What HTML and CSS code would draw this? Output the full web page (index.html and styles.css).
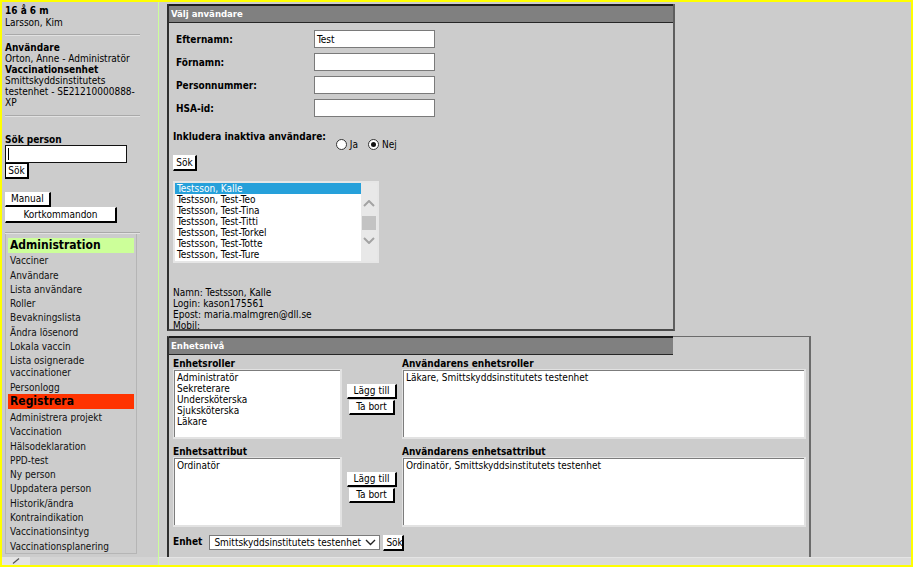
FILE: index.html
```html
<!DOCTYPE html>
<html lang="sv">
<head>
<meta charset="utf-8">
<title>Välj användare</title>
<link rel="stylesheet" href="styles.css">
</head>
<body>
<div class="frames">
  <aside class="side">
    <div class="side-view">
      <div class="patient"><b>16 å 6 m</b><br>Larsson, Kim</div>
      <hr class="sep sep-a">
      <div class="userinfo"><b>Användare</b><br>Orton, Anne - Administratör<br><b>Vaccinationsenhet</b><br>Smittskyddsinstitutets testenhet - SE21210000888-XP</div>
      <hr class="sep sep-b">
      <div class="quick">
        <div class="quick-label">Sök person</div>
        <div class="field quick-field"><span class="caret"></span></div>
        <button class="btn btn-quick">Sök</button>
      </div>
      <div class="help">
        <button class="btn btn-manual">Manual</button>
        <button class="btn btn-keys">Kortkommandon</button>
      </div>
      <hr class="sep sep-c">
      <nav class="menu">
        <div class="menu-head head-admin">Administration</div>
        <a class="menu-item">Vacciner</a>
        <a class="menu-item">Användare</a>
        <a class="menu-item">Lista användare</a>
        <a class="menu-item">Roller</a>
        <a class="menu-item">Bevakningslista</a>
        <a class="menu-item">Ändra lösenord</a>
        <a class="menu-item">Lokala vaccin</a>
        <a class="menu-item">Lista osignerade vaccinationer</a>
        <a class="menu-item">Personlogg</a>
        <div class="menu-head head-reg">Registrera</div>
        <a class="menu-item">Administrera projekt</a>
        <a class="menu-item">Vaccination</a>
        <a class="menu-item">Hälsodeklaration</a>
        <a class="menu-item">PPD-test</a>
        <a class="menu-item">Ny person</a>
        <a class="menu-item">Uppdatera person</a>
        <a class="menu-item">Historik/ändra</a>
        <a class="menu-item">Kontraindikation</a>
        <a class="menu-item">Vaccinationsintyg</a>
        <a class="menu-item">Vaccinationsplanering</a>
      </nav>
    </div>
    <div class="hbar side-hbar"><span class="grip"><svg width="8" height="6" viewBox="0 0 8 6"><path d="M1 5.5 L7 0.5" stroke="#555" stroke-width="1.2" fill="none"/></svg></span><span class="hbar-track"></span></div>
  </aside>

  <main class="main">
    <div class="main-view">
      <section class="panel panel-user">
        <h2 class="panel-head">Välj användare</h2>
        <div class="panel-body">
          <div class="form-grid">
            <label class="form-label">Efternamn:</label><div class="text-in">Test</div>
            <label class="form-label">Förnamn:</label><div class="text-in"></div>
            <label class="form-label">Personnummer:</label><div class="text-in"></div>
            <label class="form-label">HSA-id:</label><div class="text-in"></div>
          </div>
          <div class="inactive-row">
            <span class="inactive-label">Inkludera inaktiva användare:</span>
            <span class="radios">
              <span class="radio"></span><span class="radio-text">Ja</span>
              <span class="radio checked"></span><span class="radio-text">Nej</span>
            </span>
          </div>
          <button class="btn btn-search">Sök</button>
          <div class="userlist">
            <ul class="userlist-items">
              <li class="sel">Testsson, Kalle</li>
              <li>Testsson, Test-Teo</li>
              <li>Testsson, Test-Tina</li>
              <li>Testsson, Test-Titti</li>
              <li>Testsson, Test-Torkel</li>
              <li>Testsson, Test-Totte</li>
              <li>Testsson, Test-Ture</li>
            </ul>
            <div class="vscroll">
              <svg class="chev" width="12" height="7" viewBox="0 0 12 7"><polyline points="1,6 6,1 11,6" fill="none" stroke="#a3a3a3" stroke-width="2"/></svg>
              <span class="thumb"></span>
              <svg class="chev chev-down" width="12" height="7" viewBox="0 0 12 7"><polyline points="1,1 6,6 11,1" fill="none" stroke="#a3a3a3" stroke-width="2"/></svg>
            </div>
          </div>
          <div class="details">Namn: Testsson, Kalle<br>Login: kason175561<br>Epost: maria.malmgren@dll.se<br>Mobil:</div>
        </div>
      </section>

      <section class="panel panel-unit">
        <h2 class="panel-head">Enhetsnivå</h2>
        <div class="unit-grid">
          <div class="unit-cell">
            <div class="col-label">Enhetsroller</div>
            <ul class="box-list">
              <li>Administratör</li>
              <li>Sekreterare</li>
              <li>Undersköterska</li>
              <li>Sjuksköterska</li>
              <li>Läkare</li>
            </ul>
          </div>
          <div class="move-btns">
            <button class="btn btn-move">Lägg till</button>
            <button class="btn btn-move">Ta bort</button>
          </div>
          <div class="unit-cell">
            <div class="col-label">Användarens enhetsroller</div>
            <ul class="box-list">
              <li>Läkare, Smittskyddsinstitutets testenhet</li>
            </ul>
          </div>

          <div class="unit-cell">
            <div class="col-label">Enhetsattribut</div>
            <ul class="box-list">
              <li>Ordinatör</li>
            </ul>
          </div>
          <div class="move-btns">
            <button class="btn btn-move">Lägg till</button>
            <button class="btn btn-move">Ta bort</button>
          </div>
          <div class="unit-cell">
            <div class="col-label">Användarens enhetsattribut</div>
            <ul class="box-list">
              <li>Ordinatör, Smittskyddsinstitutets testenhet</li>
            </ul>
          </div>
        </div>
        <div class="unit-row">
          <span class="unit-label">Enhet</span>
          <div class="select"><span>Smittskyddsinstitutets testenhet</span><svg width="11" height="7" viewBox="0 0 11 7"><polyline points="1,1 5.5,5.5 10,1" fill="none" stroke="#222" stroke-width="1.4"/></svg></div>
          <button class="btn btn-unit">Sök</button>
        </div>
      </section>
    </div>
    <div class="hbar main-hbar"></div>
  </main>
</div>
</body>
</html>
```

FILE: styles.css
```css
* { box-sizing: border-box; }
html, body { margin: 0; padding: 0; }
body {
  width: 913px;
  height: 567px;
  overflow: hidden;
  background: #cccccc;
  border: 2px solid #ffff00;
  font-family: "DejaVu Sans Condensed", "DejaVu Sans", sans-serif;
  font-stretch: condensed;
  font-size: 10px;
  line-height: 11px;
  color: #000;
}
ul { list-style: none; margin: 0; padding: 0; }
h2 { margin: 0; }

.frames { display: flex; height: 100%; }

/* ---------- side frame ---------- */
.side {
  width: 157px;
  border-right: 1px solid #ccff99;
  display: flex;
  flex-direction: column;
}
.side-view { flex: 1; overflow: hidden; padding: 3px 0 0 3px; }
.patient { line-height: 12px; }
.sep {
  width: 135px;
  height: 2px;
  margin: 0;
  border: 0;
  border-top: 1px solid #a9a9a9;
  border-bottom: 1px solid #e2e2e2;
}
.sep-a { margin-top: 5px; }
.userinfo { margin-top: 6px; width: 136px; }
.sep-b { margin-top: 7px; }
.quick-label { font-weight: bold; margin-top: 17px; }
.field {
  background: #fff;
  border: 1px solid #111;
}
.quick-field { width: 122px; height: 18px; padding: 2px 0 0 2px; }
.caret { display: block; width: 1px; height: 12px; background: #000; }

.btn {
  display: block;
  font: inherit;
  font-stretch: condensed;
  color: #000;
  background: #fff;
  margin: 0;
  padding: 0 2px;
  height: 16px;
  line-height: 13px;
  border-style: solid;
  border-width: 1px 2px 2px 1px;
  border-color: #fff #000 #000 #fff;
  border-radius: 0;
}
.btn-quick { width: 24px; border-color: #000; }
.help { margin-top: 13px; }
.btn-manual { height: 15px; line-height: 12px; padding: 0 5px; }
.btn-keys { width: 112px; text-align: center; }
.sep-c { margin-top: 9px; }

.menu {
  width: 132px;
  border: 1px solid #b5b5b5;
  border-top: 0;
  padding: 4px 2px 0 2px;
}
.menu-head {
  font-weight: bold;
  font-size: 12px;
  line-height: 15px;
  height: 15px;
  padding-left: 2px;
}
.head-admin { background: #ccff99; }
.head-reg { background: #ff3300; margin-bottom: 1px; }
.menu-item {
  display: block;
  padding: 2.3px 0 0 2px;
  line-height: 12px;
  color: #111;
}

.hbar { height: 8px; flex: none; }
.side-hbar { display: flex; }
.grip {
  width: 28px;
  background: #e4e4e4;
  display: flex;
  align-items: center;
  justify-content: center;
}
.hbar-track { flex: 1; background: #d4d4d4; }

/* ---------- main frame ---------- */
.main { flex: 1; display: flex; flex-direction: column; min-width: 0; }
.main-view { flex: 1; overflow: hidden; padding: 2px 0 0 8px; }
.main-hbar { background: #dadada; border-top: 1px solid #e4e4e4; }

.panel {
  border-left: 2px solid #2e2e2e;
  border-right: 2px solid #5e5e5e;
  border-bottom: 2px solid #4a4a4a;
}
.panel-head {
  width: 504px;
  height: 19px;
  background: #808080;
  border-top: 2px solid #1c1c1c;
  border-bottom: 1px solid #262626;
  color: #fff;
  font-size: 9.5px;
  font-weight: bold;
  line-height: 16px;
  padding-left: 2px;
}

.panel-user { width: 508px; height: 327px; }
.panel-body { padding: 7px 0 0 4px; }
.form-grid {
  margin-left: 3px;
  display: grid;
  grid-template-columns: 138px 121px;
  grid-auto-rows: 18px;
  row-gap: 5px;
  align-items: center;
}
.form-label { font-weight: bold; }
.text-in {
  height: 18px;
  background: #fff;
  border: 1px solid #7a7a7a;
  padding: 3px 2px 0 2px;
}
.inactive-row { display: flex; margin-top: 14px; height: 19px; }
.inactive-label { font-weight: bold; line-height: 12px; margin-right: 10px; }
.radios { display: flex; align-items: center; margin-top: 8px; height: 11px; }
.radio {
  width: 11px;
  height: 11px;
  border: 1px solid #333;
  border-radius: 50%;
  background: #fff;
  display: flex;
  align-items: center;
  justify-content: center;
}
.radio.checked::after {
  content: "";
  width: 5px;
  height: 5px;
  border-radius: 50%;
  background: #111;
}
.radio-text { margin: 0 10px 0 3px; }
.btn-search { margin-top: 5px; width: 24px; }

.userlist {
  margin-top: 10px;
  width: 206px;
  height: 82px;
  border: 2px solid #e6e6e6;
  background: #fff;
  display: flex;
}
.userlist-items { flex: 1; }
.userlist-items li { padding-left: 2px; height: 11px; }
.userlist-items li.sel { background: #26a0da; color: #fff; }
.vscroll {
  width: 16px;
  background: #e8e8e8;
  display: flex;
  flex-direction: column;
  align-items: center;
  padding-top: 17px;
}
.chev { display: block; }
.thumb { display: block; width: 14px; height: 14px; background: #c3c3c3; margin-top: 9px; }
.chev-down { margin-top: 7px; }
.details { margin-top: 24px; }

.panel-unit {
  width: 644px;
  margin-top: 5px;
  border-top: 1px solid #6b6b6b;
  border-bottom: 0;
  border-right-color: #6b6b6b;
  height: 240px;
}
.panel-unit .panel-head { margin-top: -1px; }
.unit-grid {
  display: grid;
  grid-template-columns: 169px 60px 404px;
  row-gap: 7px;
  padding: 3px 0 0 4px;
}
.col-label { font-weight: bold; height: 11px; }
.box-list {
  height: 70px;
  background: #fff;
  border-style: solid;
  border-width: 1px 2px 2px 1px;
  border-color: #e2e2e2;
  box-shadow: inset 1px 1px 0 #7c7c7c;
  padding: 2px 3px 0 3px;
}
.move-btns {
  display: flex;
  flex-direction: column;
  align-items: center;
  justify-content: center;
  padding-top: 1px;
  gap: 1px;
}
.btn-move { height: 15px; line-height: 12px; padding: 0 6px; }

.unit-row { display: flex; align-items: flex-start; margin-top: 8px; padding-left: 4px; }
.unit-label { font-weight: bold; line-height: 14px; }
.select {
  margin-left: 7px;
  width: 171px;
  height: 15px;
  background: #fff;
  border: 1px solid #7a7a7a;
  display: flex;
  align-items: center;
  justify-content: space-between;
  padding: 0 3px 0 4px;
}
.btn-unit { margin-left: 3px; width: 21px; }
```
